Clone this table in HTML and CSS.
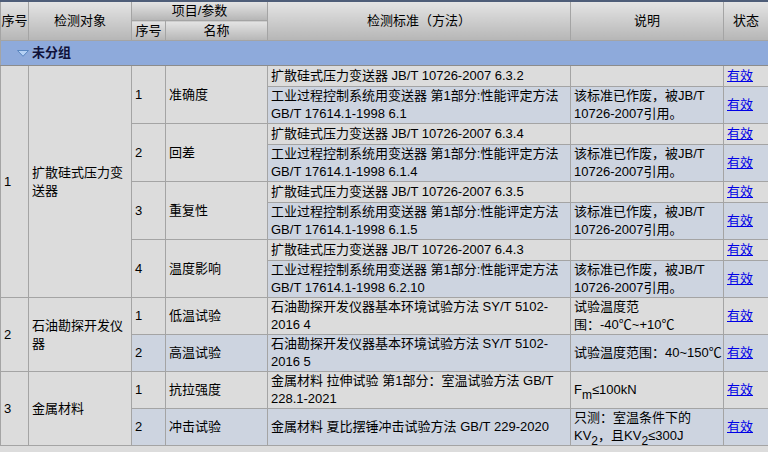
FILE: index.html
```html
<!DOCTYPE html>
<html>
<head>
<meta charset="utf-8">
<link rel="stylesheet" href="styles.css">
</head>
<body>
<div class="topbar"></div>
<table class="grid">
  <colgroup>
    <col class="c1"><col class="c2"><col class="c3"><col class="c4"><col class="c5"><col class="c6"><col class="c7">
  </colgroup>
  <thead>
    <tr class="h1">
      <th rowspan="2">序号</th>
      <th rowspan="2">检测对象</th>
      <th colspan="2">项目/参数</th>
      <th rowspan="2">检测标准（方法）</th>
      <th rowspan="2">说明</th>
      <th rowspan="2">状态</th>
    </tr>
    <tr class="h2">
      <th>序号</th>
      <th>名称</th>
    </tr>
  </thead>
  <tbody>
    <tr class="group">
      <td colspan="7"><span class="grp"><svg class="tri" width="12" height="7" viewBox="0 0 12 7"><path d="M0.5 0.5 H11.5 L6 6.3 Z" fill="#b4d0f4" stroke="#5a86c0" stroke-width="1"/></svg><b>未分组</b></span></td>
    </tr>
    <tr class="r1">
      <td rowspan="8">1</td>
      <td rowspan="8">扩散硅式压力变送器</td>
      <td rowspan="2">1</td>
      <td rowspan="2">准确度</td>
      <td>扩散硅式压力变送器 JB/T 10726-2007 6.3.2</td>
      <td></td>
      <td><a href="#">有效</a></td>
    </tr>
    <tr class="r2">
      <td class="b">工业过程控制系统用变送器 第1部分:性能评定方法 GB/T 17614.1-1998 6.1</td>
      <td class="b">该标准已作废，被JB/T 10726-2007引用。</td>
      <td class="b"><a href="#">有效</a></td>
    </tr>
    <tr class="r1">
      <td rowspan="2">2</td>
      <td rowspan="2">回差</td>
      <td>扩散硅式压力变送器 JB/T 10726-2007 6.3.4</td>
      <td></td>
      <td><a href="#">有效</a></td>
    </tr>
    <tr class="r2">
      <td class="b">工业过程控制系统用变送器 第1部分:性能评定方法 GB/T 17614.1-1998 6.1.4</td>
      <td class="b">该标准已作废，被JB/T 10726-2007引用。</td>
      <td class="b"><a href="#">有效</a></td>
    </tr>
    <tr class="r1">
      <td rowspan="2">3</td>
      <td rowspan="2">重复性</td>
      <td>扩散硅式压力变送器 JB/T 10726-2007 6.3.5</td>
      <td></td>
      <td><a href="#">有效</a></td>
    </tr>
    <tr class="r2">
      <td class="b">工业过程控制系统用变送器 第1部分:性能评定方法 GB/T 17614.1-1998 6.1.5</td>
      <td class="b">该标准已作废，被JB/T 10726-2007引用。</td>
      <td class="b"><a href="#">有效</a></td>
    </tr>
    <tr class="r1">
      <td rowspan="2">4</td>
      <td rowspan="2">温度影响</td>
      <td>扩散硅式压力变送器 JB/T 10726-2007 6.4.3</td>
      <td></td>
      <td><a href="#">有效</a></td>
    </tr>
    <tr class="r2">
      <td class="b">工业过程控制系统用变送器 第1部分:性能评定方法 GB/T 17614.1-1998 6.2.10</td>
      <td class="b">该标准已作废，被JB/T 10726-2007引用。</td>
      <td class="b"><a href="#">有效</a></td>
    </tr>
    <tr class="r2">
      <td rowspan="2">2</td>
      <td rowspan="2">石油勘探开发仪器</td>
      <td>1</td>
      <td>低温试验</td>
      <td>石油勘探开发仪器基本环境试验方法 SY/T 5102-<wbr>2016 4</td>
      <td>试验温度范<br>围：-40℃~+10℃</td>
      <td><a href="#">有效</a></td>
    </tr>
    <tr class="r2">
      <td class="b">2</td>
      <td class="b">高温试验</td>
      <td class="b">石油勘探开发仪器基本环境试验方法 SY/T 5102-<wbr>2016 5</td>
      <td class="b nw">试验温度范围：40~150℃</td>
      <td class="b"><a href="#">有效</a></td>
    </tr>
    <tr class="r2">
      <td rowspan="2">3</td>
      <td rowspan="2">金属材料</td>
      <td>1</td>
      <td>抗拉强度</td>
      <td>金属材料 拉伸试验 第1部分：室温试验方法 GB/T 228.1-2021</td>
      <td>F<sub>m</sub>≤100kN</td>
      <td><a href="#">有效</a></td>
    </tr>
    <tr class="r3">
      <td class="b">2</td>
      <td class="b">冲击试验</td>
      <td class="b">金属材料 夏比摆锤冲击试验方法 GB/T 229-2020</td>
      <td class="b">只测：室温条件下的<br>KV<sub>2</sub>，且KV<sub>2</sub>≤300J</td>
      <td class="b"><a href="#">有效</a></td>
    </tr>
  </tbody>
</table>
</body>
</html>
```

FILE: styles.css
```css
html, body {
  margin: 0;
  padding: 0;
  background: #dcdcdc;
}
body {
  font-family: "Liberation Sans", "Noto Sans CJK SC", sans-serif;
  font-size: 13px;
  color: #000;
  width: 768px;
  height: 452px;
  overflow: hidden;
}
.topbar {
  height: 2px;
  background: #4e5d78;
}
.grid {
  width: 768px;
  table-layout: fixed;
  border-collapse: collapse;
}
.c1 { width: 28px; }
.c2 { width: 103px; }
.c3 { width: 34px; }
.c4 { width: 102px; }
.c5 { width: 303px; }
.c6 { width: 153px; }
.c7 { width: 45px; }

th {
  font-weight: normal;
  text-align: center;
  border: 1px solid #a4a4a4;
  border-top: 0;
  background: linear-gradient(#e4e4e4, #b6b6b6);
  padding: 0;
  line-height: 18px;
}
.h1 th { height: 18px; }
.h2 th { height: 19px; }

td {
  border: 1px solid #a4a4a4;
  padding: 0 1px 0 3px;
  line-height: 18px;
  vertical-align: middle;
  background: #dcdcdc;
  text-align: left;
  height: 20px;
}
td.b { background: #cdd4e0; }
td.nw { white-space: nowrap; }

.group td {
  background: #8eaadb;
  height: 24px;
  padding: 0 0 0 16px;
  border-bottom: 1px solid #8c8c8c;
}
.grp {
  display: flex;
  align-items: center;
  gap: 3px;
}
.grp b {
  color: #10123a;
  font-weight: bold;
}
.tri { display: block; }

a {
  color: #0000e6;
  text-decoration: underline;
}
sub {
  font-size: 12px;
  vertical-align: -5px;
  line-height: 0;
}
```
